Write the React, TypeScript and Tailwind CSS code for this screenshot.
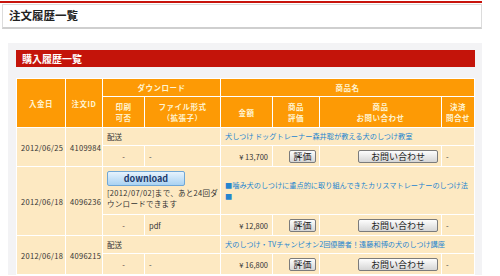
import React from 'react';

const jp = "font-['Noto_Sans_CJK_JP',_'Noto_Sans',_sans-serif]";

function SmallButton({ label, w }: { label: string; w: string }) {
  return (
    <span
      className={`inline-flex ${w} h-[13px] items-center justify-center rounded-[2px] border border-[#7b7b7b] bg-gradient-to-b from-[#fdfdfd] to-[#d6d6d6] text-[9px] leading-none text-[#222]`}
    >
      {label}
    </span>
  );
}

type Order = {
  date: string;
  id: string;
  link: string;
  price: string;
  download?: boolean;
  format: string;
};

const orders: Order[] = [
  { date: '2012/06/25', id: '4109984', link: '犬しつけ ドッグトレーナー森井聡が教える犬のしつけ教室', price: '¥ 13,700', format: '-' },
  { date: '2012/06/18', id: '4096236', link: '■噛み犬のしつけに重点的に取り組んできたカリスマトレーナーのしつけ法 ■', price: '¥ 12,800', download: true, format: 'pdf' },
  { date: '2012/06/18', id: '4096215', link: '犬のしつけ・TVチャンピオン2回優勝者！遠藤和博の犬のしつけ講座', price: '¥ 16,800', format: '-' },
];

export default function App() {
  const td = 'border border-white px-[4px] align-middle';
  return (
    <div className={`w-[500px] h-[276px] overflow-hidden bg-white text-[#333] ${jp}`}>
      {/* page title */}
      <div className="w-[482px] pt-px">
        <div className="h-[2px] bg-[#c8140c]" />
        <div className="ml-[2px] mt-px h-[25px] border border-[#dcdcdc] border-b-[2px] border-b-[#cfcfcf] bg-white pl-[6px] flex items-center">
          <span className="text-[11.5px] font-bold text-[#222]">注文履歴一覧</span>
        </div>
      </div>

      {/* panel */}
      <div className="ml-[8px] mt-[14px] w-[474px] bg-[#f3f3f5] pt-[7px] pl-[8px]">
        <div className="w-[459px] h-[17px] bg-[#c4140a] flex items-center pl-[6px]">
          <span className="text-[10px] font-bold text-white">購入履歴一覧</span>
        </div>

        <table className="mt-[11px] w-[458px] table-fixed border-collapse text-[7.5px] leading-[11px]">
          <colgroup>
            <col className="w-[49px]" />
            <col className="w-[37px]" />
            <col className="w-[42px]" />
            <col className="w-[76px]" />
            <col className="w-[52px]" />
            <col className="w-[47px]" />
            <col className="w-[122px]" />
            <col className="w-[33px]" />
          </colgroup>
          <thead className="bg-[#fd9a05] text-[#fff4d2] font-bold tracking-[0.5px]">
            <tr className="h-[18px]">
              <th rowSpan={2} className={`${td} text-center`}>入金日</th>
              <th rowSpan={2} className={`${td} text-center`}>注文ID</th>
              <th colSpan={2} className={`${td} text-center`}>ダウンロード</th>
              <th colSpan={4} className={`${td} text-center`}>商品名</th>
            </tr>
            <tr className="h-[31px]">
              <th className={`${td} text-center`}>印刷<br />可否</th>
              <th className={`${td} text-center`}>ファイル形式<br />（拡張子）</th>
              <th className={`${td} text-center`}>金額</th>
              <th className={`${td} text-center`}>商品<br />評価</th>
              <th className={`${td} text-center`}>商品<br />お問い合わせ</th>
              <th className={`${td} text-center px-[2px]`}>決済<br />問合せ</th>
            </tr>
          </thead>
          <tbody className="bg-[#fde9c2]">
            {orders.map((o) => (
              <React.Fragment key={o.id}>
                <tr className={o.download ? 'h-[48px]' : 'h-[18px]'}>
                  <td rowSpan={2} className={`${td} tracking-[0.3px]`}>{o.date}</td>
                  <td rowSpan={2} className={`${td} tracking-[0.3px]`}>{o.id}</td>
                  <td colSpan={2} className={`${td} overflow-hidden ${o.download ? 'align-top pt-[4px]' : ''}`}>
                    {o.download ? (
                      <div>
                        <span className="flex w-[78px] h-[15px] items-center justify-center rounded-[2px] border border-[#6fa7d6] bg-gradient-to-b from-[#e6f3fd] to-[#a9d2f2] text-[9px] font-bold text-[#1d3a6c] leading-none">
                          download
                        </span>
                        <div className="mt-[1px] tracking-[0.3px] whitespace-nowrap">
                          [2012/07/02]まで、あと24回ダ
                          <br />
                          ウンロードできます
                        </div>
                      </div>
                    ) : (
                      '配送'
                    )}
                  </td>
                  <td colSpan={4} className={`${td} text-[#2585cf] text-[7.2px] break-all`}>{o.link}</td>
                </tr>
                <tr className="h-[21px]">
                  <td className={`${td} text-center`}>-</td>
                  <td className={`${td} pl-[4px]`}>{o.format}</td>
                  <td className={`${td} text-right`}>{o.price}</td>
                  <td className={`${td} text-right pr-[3px]`}>
                    <SmallButton label="評価" w="w-[27px]" />
                  </td>
                  <td className={`${td} text-right pr-[3px]`}>
                    <SmallButton label="お問い合わせ" w="w-[80px]" />
                  </td>
                  <td className={`${td}`}>-</td>
                </tr>
              </React.Fragment>
            ))}
          </tbody>
        </table>
      </div>
    </div>
  );
}
